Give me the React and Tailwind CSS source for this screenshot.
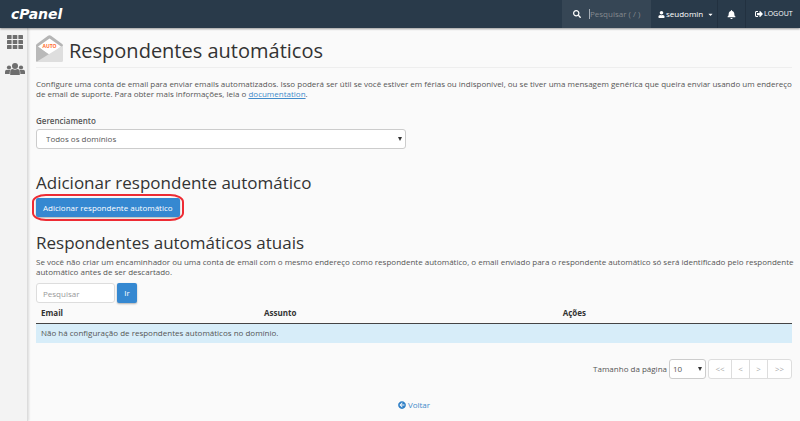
import React, { useState } from 'react';
import {
  FaSearch,
  FaUser,
  FaBell,
  FaSignOutAlt,
  FaCaretDown,
  FaArrowCircleLeft
} from 'react-icons/fa';

const columns = [
  { label: 'Email', width: 'w-[29.5%]' },
  { label: 'Assunto', width: 'w-[39.5%]' },
  { label: 'Ações', width: 'w-[31%]' }
];

const pages = [
  { label: '<<', width: 'w-[23px]' },
  { label: '<', width: 'w-[18px]' },
  { label: '>', width: 'w-[18px]' },
  { label: '>>', width: 'w-[23px]' }
];

const GridIcon = () => (
  <svg viewBox="0 0 16 14" className="w-4 h-3.5" fill="#6e6e6e">
    {[0, 5, 10].map((y) =>
      [0, 5.7, 11.4].map((x) => (
        <rect key={`${x}-${y}`} x={x} y={y} width="4.6" height="4" rx="0.6" />
      ))
    )}
  </svg>
);

const UsersIcon = () => (
  <svg viewBox="0 0 20 12" className="w-5 h-3" fill="#6e6e6e">
    <circle cx="10" cy="3" r="3" />
    <path d="M5.2 12V9Q5.2 6 7.800 6Q10 7.400 12.200 6Q14.800 6 14.800 9V12Z" />
    <circle cx="4" cy="4.500" r="2.100" />
    <circle cx="16" cy="4.500" r="2.100" />
    <path d="M0 11V8.800Q0 6.700 2 6.700Q3.900 7.500 5.700 6.700Q4.700 8 4.700 9.500V11Z" />
    <path d="M20 11V8.800Q20 6.700 18 6.700Q16.100 7.500 14.300 6.700Q15.300 8 15.300 9.500V11Z" />
  </svg>
);

const AutoresponderIcon = () => (
  <svg viewBox="0 0 27 27" className="w-[27px] h-[27px] shrink-0" role="img" aria-label="AUTO">
    <path d="M0 10.500 Q0 9.500 0.800 9 L12 0.800 Q13.500 -0.200 15 0.800 L26.200 9 Q27 9.500 27 10.500 V20 H0Z" fill="#b5b5b5" />
    <path d="M13.500 3.500 L25 11.500 L14 21 L2 11.500Z" fill="#fff" />
    <path d="M0 10.500 L14 20 L4 27 L1.500 27 Q0 27 0 25.500Z" fill="#b9b9b9" />
    <path d="M27 10.500 L1 26.500 Q1.500 27 2 27 L25.500 27 Q27 27 27 25.500Z" fill="#dedede" />
    <text x="13.500" y="13" textAnchor="middle" fontSize="5" fontWeight="700" fontFamily="Open Sans, sans-serif" fill="#ff6c2c">
      AUTO
    </text>
  </svg>
);

const SelectArrow = () => (
  <span className="pointer-events-none absolute right-1 top-0 h-full flex items-center">
    <svg viewBox="0 0 4 4" className="w-1 h-1" fill="#333">
      <path d="M0 0h4L2 4z" />
    </svg>
  </span>
);

const Header = () => (
  <header className="h-7 shrink-0 bg-[#293a4a] text-white flex items-stretch justify-between relative z-10 shadow-[0_1px_2px_rgba(0,0,0,0.4)]">
    <a href="#home" className="flex items-center pl-[11px] font-['DejaVu_Sans'] text-[14px] leading-none font-bold italic">
      cPanel
    </a>
    <div className="flex items-stretch text-[8px]">
      <label className="w-[89px] bg-[#364655] flex items-center gap-2 pl-[11px]">
        <FaSearch className="w-2 h-2 shrink-0" />
        <span className="w-px h-2.5 -mr-2 bg-[#a5adb5]" />
        <input
          aria-label="Pesquisar"
          placeholder="Pesquisar ( / )"
          className="w-14 bg-transparent outline-none placeholder:text-[#84898e]"
        />
      </label>
      <button className="w-[67px] flex items-center pl-[7px] border-r border-[#223140]">
        <FaUser className="w-[7px] h-[7px]" />
        <span className="ml-px">seudomin</span>
        <FaCaretDown className="w-[7px] h-[7px] ml-1" />
      </button>
      <button aria-label="Notificações" className="w-7 flex items-center justify-center border-r border-[#223140]">
        <FaBell className="w-[9px] h-[9px]" />
      </button>
      <a href="#logout" className="w-[54px] flex items-center gap-px pl-[9px] text-[7px]">
        <FaSignOutAlt className="w-2 h-2" />
        LOGOUT
      </a>
    </div>
  </header>
);

const App = () => {
  const [domain, setDomain] = useState('all');
  const [search, setSearch] = useState('');
  const [pageSize, setPageSize] = useState('10');

  return (
    <div className="min-h-screen flex flex-col bg-[#fafafa] text-[#555] font-['Open_Sans',sans-serif] text-[8px] leading-[10px]">
      <Header />
      <div className="flex flex-1">
        <nav className="w-7 shrink-0 bg-[#f3f3f3] border-r border-[#dcdcdc] shadow-[1px_0_2px_rgba(0,0,0,0.12)] flex flex-col items-center gap-3.5 pt-[7px] pl-0.5">
          <a href="#apps" aria-label="Início"><GridIcon /></a>
          <a href="#users" aria-label="Usuários"><UsersIcon /></a>
        </nav>

        <main className="flex-1 pl-2 pr-2">
          <div className="flex items-start gap-1.5 h-10 pt-[7px] border-b border-[#eee]">
            <AutoresponderIcon />
            <h1 className="pt-0.5 text-[20px] leading-7 text-[#333]">Respondentes automáticos</h1>
          </div>

          <p className="mt-[11px]">
            Configure uma conta de email para enviar emails automatizados. Isso poderá ser útil se você estiver em férias ou
            indisponível, ou se tiver uma mensagem genérica que queira enviar usando um endereço de email de suporte. Para
            obter mais informações, leia o <a href="#docs" className="text-[#428bca] underline">documentation</a>.
          </p>

          <label htmlFor="domain" className="block mt-[17px] font-semibold">Gerenciamento</label>
          <div className="relative mt-[3px] w-[49%]">
            <select
              id="domain"
              value={domain}
              onChange={(e) => setDomain(e.target.value)}
              className="block appearance-none w-full h-5 pl-[9px] bg-white border border-[#ccc] rounded-[3px]"
            >
              <option value="all">Todos os domínios</option>
            </select>
            <SelectArrow />
          </div>

          <h2 className="mt-6 text-[17px] leading-5 text-[#333]">Adicionar respondente automático</h2>
          <div className="relative mt-[5px] w-fit">
            <button className="block h-[19px] px-[7px] bg-[#3588d1] text-white rounded-xs shadow-[0_1px_2px_rgba(0,0,0,0.3)]">
              Adicionar respondente automático
            </button>
            <span className="pointer-events-none absolute -inset-1 border-2 border-[#ee2b33] rounded-[14px/8px]" />
          </div>

          <h2 className="mt-4 text-[17px] leading-5 text-[#333]">Respondentes automáticos atuais</h2>
          <p className="mt-1 -mr-1">
            Se você não criar um encaminhador ou uma conta de email com o mesmo endereço como respondente automático, o email
            enviado para o respondente automático só será identificado pelo respondente automático antes de ser descartado.
          </p>

          <form className="flex gap-0.5 mt-1.5" onSubmit={(e) => e.preventDefault()}>
            <input
              aria-label="Pesquisar"
              placeholder="Pesquisar"
              value={search}
              onChange={(e) => setSearch(e.target.value)}
              className="w-[79px] h-5 px-1.5 bg-white border border-[#ddd] rounded-[3px] placeholder:text-[#999]"
            />
            <button className="w-5 h-5 bg-[#3588d1] text-white rounded-xs shadow-[0_1px_2px_rgba(0,0,0,0.3)]">Ir</button>
          </form>

          <table className="w-full table-fixed text-left">
            <thead>
              <tr className="h-5 border-b border-[#444] text-[#333]">
                {columns.map((c) => (
                  <th key={c.label} className={`${c.width} px-[5px] font-bold`}>{c.label}</th>
                ))}
              </tr>
            </thead>
            <tbody>
              <tr className="h-5 bg-[#d7edf9]">
                <td colSpan={3} className="px-[5px]">Não há configuração de respondentes automáticos no domínio.</td>
              </tr>
            </tbody>
          </table>

          <div className="flex justify-end items-center mt-4">
            <label htmlFor="page-size">Tamanho da página</label>
            <div className="relative ml-0.5 mr-0.5">
              <select
                id="page-size"
                value={pageSize}
                onChange={(e) => setPageSize(e.target.value)}
                className="block appearance-none w-[37px] h-5 pl-[3px] bg-white border border-[#ccc] rounded-[3px]"
              >
                <option>10</option>
                <option>20</option>
                <option>50</option>
              </select>
              <SelectArrow />
            </div>
            <div className="flex h-5 bg-white border border-[#ddd] rounded-[3px] divide-x divide-[#ddd] text-[#aaa]">
              {pages.map((p) => (
                <button key={p.label} className={p.width}>{p.label}</button>
              ))}
            </div>
          </div>

          <div className="flex justify-center mt-[21px] pb-2">
            <a href="#back" className="flex items-center gap-0.5 text-[#428bca]">
              <FaArrowCircleLeft className="w-2 h-2 text-[#2f7fc6]" />
              Voltar
            </a>
          </div>
        </main>
      </div>
    </div>
  );
};

export default App;
